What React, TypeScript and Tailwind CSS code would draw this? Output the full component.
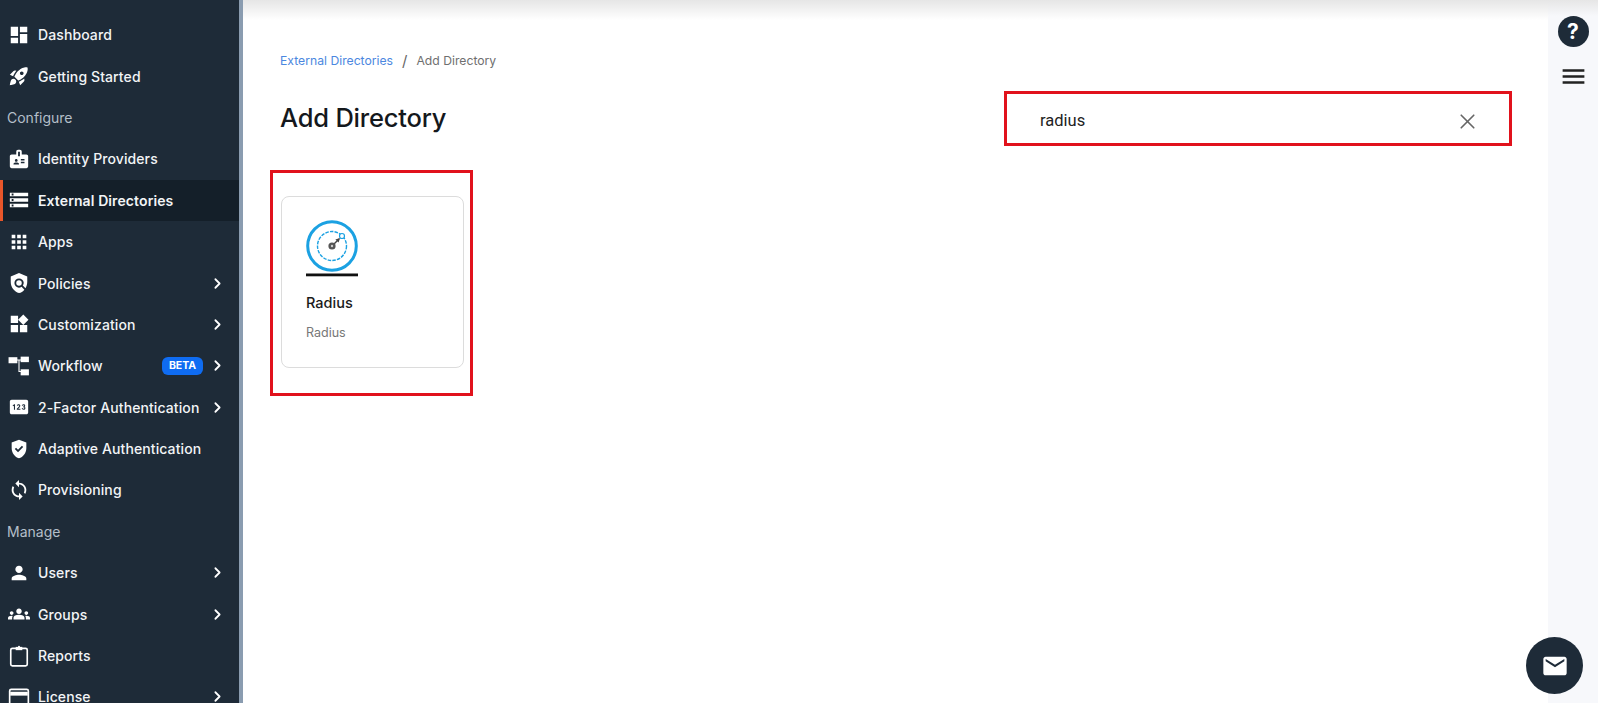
import { ChevronRight, X } from "lucide-react";
import type { ComponentType, ReactNode } from "react";
import {
  MdDashboard,
  MdRocketLaunch,
  MdBadge,
  MdStorage,
  MdApps,
  MdPolicy,
  MdWidgets,
  MdPin,
  MdGppGood,
  MdSync,
  MdPerson,
  MdGroups,
  MdMenu,
  MdEmail,
} from "react-icons/md";

const sans = "font-['Inter','Liberation_Sans',sans-serif]";

type IconProps = { className?: string };

function WorkflowIcon({ className }: IconProps) {
  return (
    <svg viewBox="0 0 20 20" fill="currentColor" className={className}>
      <rect x="0.5" y="2" width="8" height="5.5" />
      <rect x="11.5" y="1.5" width="7.5" height="5" />
      <rect x="11.5" y="13" width="7.5" height="5.5" />
      <path d="M8 4h4v1H8zM9.5 4h1v11.5h-1zM9.5 14.5h3v1h-3z" />
    </svg>
  );
}

function ClipboardIcon({ className }: IconProps) {
  return (
    <svg viewBox="0 0 20 20" fill="none" stroke="currentColor" strokeWidth="1.5" className={className}>
      <rect x="2.5" y="3" width="15" height="16" rx="1.5" />
      <path d="M7 3.2h6" strokeWidth="3" />
      <circle cx="10" cy="1.6" r="0.9" fill="currentColor" stroke="none" />
    </svg>
  );
}

function LicenseIcon({ className }: IconProps) {
  return (
    <svg viewBox="0 0 20 20" fill="none" stroke="currentColor" strokeWidth="1.5" className={className}>
      <rect x="1.5" y="3" width="17" height="14" rx="1.5" />
      <path d="M2 7h16" strokeWidth="3.5" />
    </svg>
  );
}

type Item = {
  label: string;
  icon: ComponentType<IconProps>;
  chevron?: boolean;
  active?: boolean;
  beta?: boolean;
};

const top: Item[] = [
  { label: "Dashboard", icon: MdDashboard },
  { label: "Getting Started", icon: MdRocketLaunch },
];

const configure: Item[] = [
  { label: "Identity Providers", icon: MdBadge },
  { label: "External Directories", icon: MdStorage, active: true },
  { label: "Apps", icon: MdApps },
  { label: "Policies", icon: MdPolicy, chevron: true },
  { label: "Customization", icon: MdWidgets, chevron: true },
  { label: "Workflow", icon: WorkflowIcon, chevron: true, beta: true },
  { label: "2-Factor Authentication", icon: MdPin, chevron: true },
  { label: "Adaptive Authentication", icon: MdGppGood },
  { label: "Provisioning", icon: MdSync },
];

const manage: Item[] = [
  { label: "Users", icon: MdPerson, chevron: true },
  { label: "Groups", icon: MdGroups, chevron: true },
  { label: "Reports", icon: ClipboardIcon },
  { label: "License", icon: LicenseIcon, chevron: true },
];

function NavRow({ item }: { item: Item }) {
  const Icon = item.icon;
  return (
    <div
      className={
        "flex h-[41.4px] shrink-0 items-center pr-[13px] " +
        (item.active
          ? "border-l-[3px] border-[#e8562a] bg-[#141f29] pl-[5px] font-semibold"
          : "pl-[8px] font-medium")
      }
    >
      <Icon className="size-[22px] shrink-0 text-white" />
      <span className="ml-[8px] flex-1 whitespace-nowrap text-[14px] tracking-[0.1px] text-[#f2f4f6]">{item.label}</span>
      {item.beta && (
        <span className="mr-[6px] flex h-[18px] w-[41px] items-center justify-center rounded-md bg-[#0f6cf2] text-[10.5px] font-bold text-white">
          BETA
        </span>
      )}
      {item.chevron && <ChevronRight className="size-[17px] text-white" strokeWidth={2.5} />}
    </div>
  );
}

function SectionLabel({ children }: { children: ReactNode }) {
  return (
    <div className="flex h-[41.4px] shrink-0 items-center pl-[7px] text-[14px] text-[#b4bfc9]">{children}</div>
  );
}

function RadiusLogo() {
  return (
    <svg viewBox="0 0 52 57" className="h-[57px] w-[52px]">
      <circle cx="26" cy="26" r="24.3" fill="none" stroke="#1ba1e2" strokeWidth="3" />
      <circle cx="26" cy="26" r="14.5" fill="none" stroke="#1ba1e2" strokeWidth="1.4" strokeDasharray="3.5 1.2" />
      <circle cx="36" cy="16" r="2.5" fill="#fff" stroke="#1ba1e2" strokeWidth="1.2" />
      <line x1="26" y1="26" x2="33" y2="19" stroke="#444" strokeWidth="1.5" />
      <path d="M34 18 L29.4 19.4 L32.6 22.6 Z" fill="#444" />
      <circle cx="26" cy="26" r="3.6" fill="#555" />
      <circle cx="26" cy="26" r="1.2" fill="#ccc" />
      <rect x="0" y="53.5" width="52" height="2.8" fill="#111" />
    </svg>
  );
}

export default function App() {
  return (
    <div className={"flex h-[703px] w-full overflow-hidden bg-white " + sans}>
      <aside className="flex h-full w-[243px] shrink-0 flex-col overflow-hidden border-r-[4px] border-[#8a9cb0] bg-[#1e2b38] pt-[14px]">
        {top.map((i) => (
          <NavRow key={i.label} item={i} />
        ))}
        <SectionLabel>Configure</SectionLabel>
        {configure.map((i) => (
          <NavRow key={i.label} item={i} />
        ))}
        <SectionLabel>Manage</SectionLabel>
        {manage.map((i) => (
          <NavRow key={i.label} item={i} />
        ))}
      </aside>

      <main className="flex min-w-0 flex-1 flex-col">
        <div className="h-[20px] shrink-0 bg-gradient-to-b from-[#e6e6e6] to-white" />
        <div className="pl-[37px] pr-[36px]">
          <div className="mt-[30px] flex items-center text-[12.2px]">
            <span className="text-[#4b87e0]">External Directories</span>
            <span className="mx-[9px] text-[15px] text-[#666]">/</span>
            <span className="text-[#6f6f6f]">Add Directory</span>
          </div>
          <div className="mt-[18px] flex items-center justify-between">
            <h1 className="text-[25.5px] font-medium tracking-[-0.2px] text-[#14181c]">Add Directory</h1>
            <div className="flex h-[55px] w-[508px] items-center justify-between border-[3px] border-[#e1121c] pl-[33px] pr-[29px] pt-[7px]">
              <span className="font-['Roboto',sans-serif] text-[16.5px] text-[#222]">radius</span>
              <X className="size-[25px] text-[#666]" strokeWidth={1.6} />
            </div>
          </div>
          <div className="-ml-[10px] mt-[24px] h-[226px] w-[203px] border-[3px] border-[#e1121c] px-[8px] pt-[23px]">
            <div className="flex h-[172px] w-[183px] flex-col rounded-lg border border-[#dcdcdc] pl-[24px] pt-[23px]">
              <RadiusLogo />
              <div className="mt-[15px] text-[14.5px] font-medium text-[#1a1a1a]">Radius</div>
              <div className="mt-[11px] text-[12.5px] text-[#777]">Radius</div>
            </div>
          </div>
        </div>
      </main>

      <div className="flex w-[50px] shrink-0 flex-col items-center bg-[#f7f8fb]">
        <div className="h-[16px] w-full shrink-0 bg-gradient-to-b from-[#e6e6e6] to-[#f7f8fb]" />
        <div className="flex size-[31px] items-center justify-center rounded-full bg-[#1e2b38] text-[21px] font-bold text-white">
          ?
        </div>
        <MdMenu className="mt-[15px] size-[29px] text-[#222]" />
      </div>

      <div className="fixed left-[1526px] top-[637px] flex size-[57px] items-center justify-center rounded-full bg-[#1e2b38]">
        <MdEmail className="size-[28px] text-white" />
      </div>
    </div>
  );
}
